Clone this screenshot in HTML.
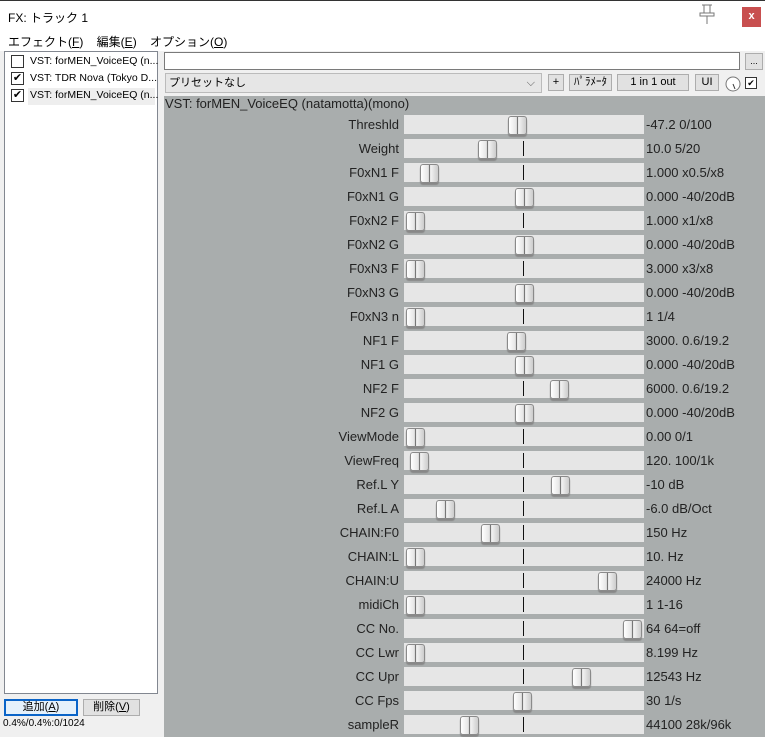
<!DOCTYPE html>
<html><head><meta charset="utf-8"><style>
*{box-sizing:border-box}
body{margin:0;width:765px;height:737px;background:#f0f0f0;font-family:"Liberation Sans","Noto Sans CJK JP",sans-serif;font-size:12px;color:#000;position:relative;overflow:hidden}
.a{position:absolute}
.lbl{position:absolute;left:166px;width:233px;text-align:right;font-size:13px;color:#222;height:19px;line-height:19px}
.bar{position:absolute;left:404px;width:240px;height:19px;background:#e6e6e6}
.tick{position:absolute;left:523px;width:1px;height:15px;background:#111}
.th{position:absolute;width:19px;height:19px;border:1px solid #8a8a8a;border-radius:3px;background:linear-gradient(90deg,#fff,#e4e4e4 45%,#777 48%,#777 52%,#f4f4f4 55%,#ccc);box-shadow:0 2px 1px #888}
.val{position:absolute;left:646px;font-size:13px;color:#222;height:19px;line-height:19px}
.btn{position:absolute;border:1px solid #adadad;background:#e1e1e1;font-size:11px;text-align:center;line-height:15px;height:17px}
</style></head><body>
<div class="a" style="left:0;top:0;width:765px;height:1px;background:#333"></div>
<div class="a" style="left:0;top:1px;width:765px;height:30px;background:#fff"></div>
<div class="a" style="left:8px;top:9px;font-size:12px">FX: トラック 1</div>
<svg class="a" style="left:697px;top:3px" width="20" height="22" viewBox="0 0 20 22"><path d="M5 2h10M7 2v8M13 2v8M3 10h14v3H3zM10 13v8" fill="none" stroke="#777" stroke-width="1"/></svg>
<div class="a" style="left:742px;top:7px;width:19px;height:20px;background:#c84f4f;color:#fff;font-size:11px;text-align:center;line-height:19px;font-weight:bold">x</div>
<div class="a" style="left:0;top:31px;width:765px;height:20px;background:#fff"></div>
<div class="a" style="left:8px;top:33px;font-size:12px;word-spacing:10px">エフェクト(<u>F</u>) 編集(<u>E</u>) オプション(<u>O</u>)</div>
<div class="a" style="left:4px;top:51px;width:154px;height:643px;background:#fff;border:1px solid #828790"></div>
<div class="a" style="left:11px;top:55px;width:13px;height:13px;border:1px solid #333;background:#fff"></div>
<div class="a" style="left:30px;top:55px;font-size:10.5px">VST: forMEN_VoiceEQ (n...</div>
<div class="a" style="left:11px;top:72px;width:13px;height:13px;border:1px solid #333;background:#fff;font-size:11px;line-height:11px;text-align:center">✔</div>
<div class="a" style="left:30px;top:72px;font-size:10.5px">VST: TDR Nova (Tokyo D...</div>
<div class="a" style="left:28px;top:88px;width:127px;height:17px;background:#eee"></div>
<div class="a" style="left:11px;top:89px;width:13px;height:13px;border:1px solid #333;background:#fff;font-size:11px;line-height:11px;text-align:center">✔</div>
<div class="a" style="left:30px;top:89px;font-size:10.5px">VST: forMEN_VoiceEQ (n...</div>
<div class="btn" style="left:4px;top:699px;width:74px;border:2px solid #0a64c8;background:#e5f1fb;line-height:13px">追加(<u>A</u>)</div>
<div class="btn" style="left:83px;top:699px;width:57px">削除(<u>V</u>)</div>
<div class="a" style="left:3px;top:718px;font-size:10px">0.4%/0.4%:0/1024</div>
<div class="a" style="left:164px;top:52px;width:576px;height:18px;background:#fff;border:1px solid #7a7a7a"></div>
<div class="btn" style="left:745px;top:53px;width:18px;font-size:9px">...</div>
<div class="a" style="left:165px;top:73px;width:377px;height:20px;background:#e6e6e6;border:1px solid #bbb;font-size:11px;line-height:18px;padding-left:3px">プリセットなし<span style="position:absolute;right:6px;color:#555">⌵</span></div>
<div class="btn" style="left:548px;top:74px;width:16px">+</div>
<div class="btn" style="left:569px;top:74px;width:43px">ﾊﾟﾗﾒｰﾀ</div>
<div class="btn" style="left:617px;top:74px;width:72px">1 in 1 out</div>
<div class="btn" style="left:695px;top:74px;width:24px">UI</div>
<svg class="a" style="left:725px;top:76px" width="16" height="16"><circle cx="8" cy="8" r="7" fill="#fff" stroke="#777"/><path d="M8 8l2 5" stroke="#333"/></svg>
<div class="a" style="left:745px;top:77px;width:12px;height:12px;border:1px solid #333;background:#fff;font-size:9px;line-height:10px;text-align:center">✔</div>
<div class="a" style="left:164px;top:96px;width:601px;height:641px;background:#a9adad"></div>
<div class="a" style="left:165px;top:96px;font-size:13px;color:#222">VST: forMEN_VoiceEQ (natamotta)(mono)</div>

<div class="lbl" style="top:115px">Threshld</div><div class="bar" style="top:115px"></div><div class="tick" style="top:117px"></div><div class="th" style="left:508px;top:116px"></div><div class="val" style="top:115px">-47.2 0/100</div>
<div class="lbl" style="top:139px">Weight</div><div class="bar" style="top:139px"></div><div class="tick" style="top:141px"></div><div class="th" style="left:478px;top:140px"></div><div class="val" style="top:139px">10.0 5/20</div>
<div class="lbl" style="top:163px">F0xN1 F</div><div class="bar" style="top:163px"></div><div class="tick" style="top:165px"></div><div class="th" style="left:420px;top:164px"></div><div class="val" style="top:163px">1.000 x0.5/x8</div>
<div class="lbl" style="top:187px">F0xN1 G</div><div class="bar" style="top:187px"></div><div class="tick" style="top:189px"></div><div class="th" style="left:515px;top:188px"></div><div class="val" style="top:187px">0.000 -40/20dB</div>
<div class="lbl" style="top:211px">F0xN2 F</div><div class="bar" style="top:211px"></div><div class="tick" style="top:213px"></div><div class="th" style="left:406px;top:212px"></div><div class="val" style="top:211px">1.000 x1/x8</div>
<div class="lbl" style="top:235px">F0xN2 G</div><div class="bar" style="top:235px"></div><div class="tick" style="top:237px"></div><div class="th" style="left:515px;top:236px"></div><div class="val" style="top:235px">0.000 -40/20dB</div>
<div class="lbl" style="top:259px">F0xN3 F</div><div class="bar" style="top:259px"></div><div class="tick" style="top:261px"></div><div class="th" style="left:406px;top:260px"></div><div class="val" style="top:259px">3.000 x3/x8</div>
<div class="lbl" style="top:283px">F0xN3 G</div><div class="bar" style="top:283px"></div><div class="tick" style="top:285px"></div><div class="th" style="left:515px;top:284px"></div><div class="val" style="top:283px">0.000 -40/20dB</div>
<div class="lbl" style="top:307px">F0xN3 n</div><div class="bar" style="top:307px"></div><div class="tick" style="top:309px"></div><div class="th" style="left:406px;top:308px"></div><div class="val" style="top:307px">1 1/4</div>
<div class="lbl" style="top:331px">NF1 F</div><div class="bar" style="top:331px"></div><div class="tick" style="top:333px"></div><div class="th" style="left:507px;top:332px"></div><div class="val" style="top:331px">3000. 0.6/19.2</div>
<div class="lbl" style="top:355px">NF1 G</div><div class="bar" style="top:355px"></div><div class="tick" style="top:357px"></div><div class="th" style="left:515px;top:356px"></div><div class="val" style="top:355px">0.000 -40/20dB</div>
<div class="lbl" style="top:379px">NF2 F</div><div class="bar" style="top:379px"></div><div class="tick" style="top:381px"></div><div class="th" style="left:550px;top:380px"></div><div class="val" style="top:379px">6000. 0.6/19.2</div>
<div class="lbl" style="top:403px">NF2 G</div><div class="bar" style="top:403px"></div><div class="tick" style="top:405px"></div><div class="th" style="left:515px;top:404px"></div><div class="val" style="top:403px">0.000 -40/20dB</div>
<div class="lbl" style="top:427px">ViewMode</div><div class="bar" style="top:427px"></div><div class="tick" style="top:429px"></div><div class="th" style="left:406px;top:428px"></div><div class="val" style="top:427px">0.00 0/1</div>
<div class="lbl" style="top:451px">ViewFreq</div><div class="bar" style="top:451px"></div><div class="tick" style="top:453px"></div><div class="th" style="left:410px;top:452px"></div><div class="val" style="top:451px">120. 100/1k</div>
<div class="lbl" style="top:475px">Ref.L Y</div><div class="bar" style="top:475px"></div><div class="tick" style="top:477px"></div><div class="th" style="left:551px;top:476px"></div><div class="val" style="top:475px">-10 dB</div>
<div class="lbl" style="top:499px">Ref.L A</div><div class="bar" style="top:499px"></div><div class="tick" style="top:501px"></div><div class="th" style="left:436px;top:500px"></div><div class="val" style="top:499px">-6.0 dB/Oct</div>
<div class="lbl" style="top:523px">CHAIN:F0</div><div class="bar" style="top:523px"></div><div class="tick" style="top:525px"></div><div class="th" style="left:481px;top:524px"></div><div class="val" style="top:523px">150 Hz</div>
<div class="lbl" style="top:547px">CHAIN:L</div><div class="bar" style="top:547px"></div><div class="tick" style="top:549px"></div><div class="th" style="left:406px;top:548px"></div><div class="val" style="top:547px">10. Hz</div>
<div class="lbl" style="top:571px">CHAIN:U</div><div class="bar" style="top:571px"></div><div class="tick" style="top:573px"></div><div class="th" style="left:598px;top:572px"></div><div class="val" style="top:571px">24000 Hz</div>
<div class="lbl" style="top:595px">midiCh</div><div class="bar" style="top:595px"></div><div class="tick" style="top:597px"></div><div class="th" style="left:406px;top:596px"></div><div class="val" style="top:595px">1 1-16</div>
<div class="lbl" style="top:619px">CC No.</div><div class="bar" style="top:619px"></div><div class="tick" style="top:621px"></div><div class="th" style="left:623px;top:620px"></div><div class="val" style="top:619px">64 64=off</div>
<div class="lbl" style="top:643px">CC Lwr</div><div class="bar" style="top:643px"></div><div class="tick" style="top:645px"></div><div class="th" style="left:406px;top:644px"></div><div class="val" style="top:643px">8.199 Hz</div>
<div class="lbl" style="top:667px">CC Upr</div><div class="bar" style="top:667px"></div><div class="tick" style="top:669px"></div><div class="th" style="left:572px;top:668px"></div><div class="val" style="top:667px">12543 Hz</div>
<div class="lbl" style="top:691px">CC Fps</div><div class="bar" style="top:691px"></div><div class="tick" style="top:693px"></div><div class="th" style="left:513px;top:692px"></div><div class="val" style="top:691px">30 1/s</div>
<div class="lbl" style="top:715px">sampleR</div><div class="bar" style="top:715px"></div><div class="tick" style="top:717px"></div><div class="th" style="left:460px;top:716px"></div><div class="val" style="top:715px">44100 28k/96k</div>
</body></html>
